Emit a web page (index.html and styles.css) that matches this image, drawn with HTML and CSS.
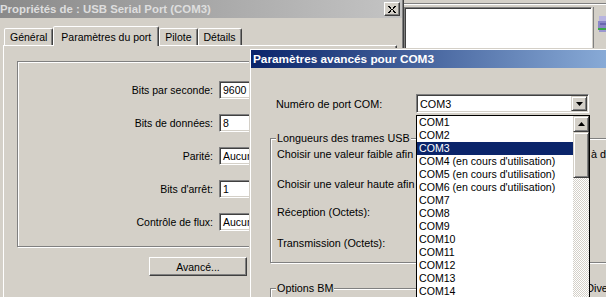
FILE: index.html
```html
<!DOCTYPE html>
<html lang="fr">
<head>
  <meta charset="UTF-8">
  <meta name="viewport" content="width=device-width, initial-scale=1.0">
  <title>Paramètres avancés pour COM3</title>
  <link rel="stylesheet" href="styles.css">
</head>
<body>

  <!-- background window: port properties -->
  <div class="win props">
    <div class="caption inactive">
      <span class="caption-text">Propriétés de : USB Serial Port (COM3)</span>
      <span class="cap-btn">
        <svg width="8" height="7" viewBox="0 0 8 7" shape-rendering="crispEdges">
          <path d="M0 0h2v1h-2zM1 1h2v1h-2zM2 2h1v1h-1zM3 3h2v1h-2zM2 4h1v1h-1zM1 5h2v1h-2zM0 6h2v1h-2zM6 0h2v1h-2zM5 1h2v1h-2zM5 2h1v1h-1zM5 4h1v1h-1zM5 5h2v1h-2zM6 6h2v1h-2z" fill="#000"/>
        </svg>
      </span>
    </div>

    <div class="tabs">
      <div class="tab">Général</div>
      <div class="tab active">Paramètres du port</div>
      <div class="tab">Pilote</div>
      <div class="tab">Détails</div>
    </div>

    <div class="tab-panel">
      <div class="frame">
        <div class="field"><label>Bits par seconde:</label><div class="combo">9600</div></div>
        <div class="field"><label>Bits de données:</label><div class="combo">8</div></div>
        <div class="field"><label>Parité:</label><div class="combo">Aucune</div></div>
        <div class="field"><label>Bits d'arrêt:</label><div class="combo">1</div></div>
        <div class="field"><label>Contrôle de flux:</label><div class="combo">Aucun</div></div>
      </div>
      <div class="btn-row">
        <button class="btn">Avancé...</button>
        <button class="btn wide">Paramètres par défaut</button>
      </div>
    </div>
  </div>

  <!-- window behind, top right -->
  <div class="win explorer">
    <div class="ex-bar"></div>
    <div class="ex-main">
      <div class="ex-list"></div>
      <div class="ex-side">
        <svg width="10" height="18" viewBox="0 0 10 18">
          <rect x="1" y="1" width="9" height="6" fill="#b8b4e0"/>
          <rect x="0" y="6" width="10" height="7" fill="#8a86c8"/>
          <rect x="2" y="8" width="8" height="2" fill="#6a66b0"/>
          <rect x="0" y="13" width="10" height="2" fill="#3aa64a"/>
          <rect x="1" y="15" width="9" height="2" fill="#9a96d0"/>
        </svg>
      </div>
    </div>
  </div>

  <!-- front window: advanced settings -->
  <div class="win adv">
    <div class="caption active">Paramètres avancés pour COM3</div>
    <div class="adv-body">
      <div class="port-row">
        <label>Numéro de port COM:</label>
        <div class="dropdown">
          <div class="combo port">COM3<span class="drop-btn"><svg width="7" height="4" viewBox="0 0 7 4"><polygon points="0,0 7,0 3.5,4" fill="#000"/></svg></span></div>
          <div class="listbox">
            <ul class="items">
              <li>COM1</li>
              <li>COM2</li>
              <li class="sel">COM3</li>
              <li>COM4 (en cours d'utilisation)</li>
              <li>COM5 (en cours d'utilisation)</li>
              <li>COM6 (en cours d'utilisation)</li>
              <li>COM7</li>
              <li>COM8</li>
              <li>COM9</li>
              <li>COM10</li>
              <li>COM11</li>
              <li>COM12</li>
              <li>COM13</li>
              <li>COM14</li>
              <li>COM15</li>
            </ul>
            <div class="vscroll">
              <div class="sb-btn"><svg width="7" height="4" viewBox="0 0 7 4"><polygon points="3.5,0 7,4 0,4" fill="#000"/></svg></div>
              <div class="sb-thumb"></div>
              <div class="sb-track"></div>
            </div>
          </div>
        </div>
      </div>

      <fieldset class="group usb">
        <legend>Longueurs des trames USB</legend>
        <p>Choisir une valeur faible afin de réduire les problèmes de latence à débit faible.</p>
        <p class="second">Choisir une valeur haute afin d'améliorer les performances.</p>
        <div class="size-row"><span>Réception (Octets):</span><div class="combo small"></div></div>
        <div class="size-row"><span>Transmission (Octets):</span><div class="combo small"></div></div>
      </fieldset>

      <div class="group-row">
        <fieldset class="group bm"><legend>Options BM</legend></fieldset>
        <fieldset class="group misc"><legend>Divers</legend></fieldset>
      </div>
    </div>
  </div>

</body>
</html>
```

FILE: styles.css
```css
* {
  box-sizing: border-box;
}
body {
  margin: 0;
  width: 606px;
  height: 297px;
  overflow: hidden;
  position: relative;
  background: #d4d0c8;
  font-family: "Liberation Sans", Arial, sans-serif;
  font-size: 10.5px;
  color: #000;
}
.win {
  position: absolute;
  background: #d4d0c8;
}

/* shared widgets */
.caption {
  height: 18px;
  display: flex;
  align-items: center;
  justify-content: space-between;
  font-weight: bold;
  white-space: nowrap;
}
.caption.inactive {
  background: linear-gradient(to right, #8a8a8a, #c4c4c4);
  color: #dedede;
  font-size: 11.4px;
  margin-right: 1px;
  padding-right: 2px;
}
.caption.active {
  width: 440px;
  background: linear-gradient(to right, #0a246a, #a6caf0);
  color: #fff;
  font-size: 11.8px;
  padding-left: 2px;
}
.cap-btn {
  width: 16px;
  height: 14px;
  display: flex;
  align-items: center;
  justify-content: center;
  background: #d4d0c8;
  border: 1px solid;
  border-color: #fff #404040 #404040 #fff;
  box-shadow: inset -1px -1px #808080;
}
.combo {
  position: relative;
  height: 18px;
  width: 150px;
  background: #fff;
  border: 1px solid;
  border-color: #808080 #fff #fff #808080;
  box-shadow: inset 1px 1px #404040, inset -1px -1px #d4d0c8;
  padding-left: 3px;
  display: flex;
  align-items: center;
}
.btn {
  height: 19px;
  width: 98px;
  font: inherit;
  background: #d4d0c8;
  border: 1px solid;
  border-color: #fff #404040 #404040 #fff;
  box-shadow: inset -1px -1px #808080;
  padding: 0;
}
.btn.wide {
  width: 128px;
}
.group {
  margin: 0;
  border: 1px solid #808080;
  box-shadow: inset 1px 1px #fff, 1px 1px #fff;
  padding: 0 6px;
}
.group legend {
  background: #d4d0c8;
  padding: 0 1px;
  margin-left: -1px;
  line-height: 13px;
}

/* properties window */
.props {
  left: 0;
  top: 0;
  width: 404px;
  height: 310px;
  border-right: 1px solid #404040;
  box-shadow: inset -1px 0 #808080;
}
.caption-text {
  padding-left: 0;
}
.tabs {
  display: flex;
  align-items: flex-end;
  height: 19px;
  margin: 8px 0 0 4px;
  position: relative;
  z-index: 1;
}
.tab {
  height: 17px;
  padding: 0 5px;
  display: flex;
  align-items: center;
  background: #d4d0c8;
  border: 1px solid;
  border-bottom: none;
  border-color: #fff #404040 transparent #fff;
  border-radius: 2px 2px 0 0;
  box-shadow: inset -1px 0 #808080;
}
.tab.active {
  height: 20px;
  margin-bottom: -1px;
  padding: 0 7px;
}
.tab-panel {
  height: 270px;
  margin: 0 6px 0 3px;
  border: 1px solid;
  border-color: #fff #404040 #404040 #fff;
  box-shadow: inset -1px -1px #808080;
  padding: 15px 13px 0 13px;
}
.frame {
  display: flex;
  flex-direction: column;
  gap: 15px;
  border: 1px solid #808080;
  box-shadow: inset 1px 1px #fff, 1px 1px #fff;
  padding: 19px 0 15px 0;
}
.field {
  display: flex;
  align-items: center;
  height: 18px;
}
.field label {
  width: 195px;
  text-align: right;
  margin-right: 6px;
}
.btn-row {
  display: flex;
  justify-content: flex-end;
  gap: 8px;
  margin-top: 10px;
}

/* window at the top right */
.explorer {
  left: 404px;
  top: 0;
  width: 210px;
  height: 60px;
}
.ex-bar {
  height: 7px;
  border-top: 3px solid #d4d0c8;
  box-shadow: inset 0 1px #808080;
}
.ex-bar::after {
  content: "";
  display: block;
  height: 1px;
  margin-top: 1px;
  background: #fff;
}
.ex-main {
  display: flex;
  height: 53px;
}
.ex-list {
  width: 188px;
  background: #fff;
  border: 1px solid;
  border-color: #808080 #fff #fff #808080;
  box-shadow: inset 1px 1px #404040;
}
.ex-side {
  flex: 1;
  border-left: 1px solid #808080;
  margin-left: 1px;
  padding: 8px 0 0 4px;
}

/* advanced window */
.adv {
  left: 249px;
  top: 48px;
  width: 450px;
  height: 260px;
  border-left: 1px solid #d4d0c8;
  border-top: 1px solid #d4d0c8;
  box-shadow: inset 1px 1px #fff;
  padding: 1px 0 0 1px;
  font-size: 10.8px;
}
.adv-body {
  padding: 26px 0 0 19px;
}
.port-row {
  display: flex;
  align-items: center;
  height: 19px;
  padding-left: 6px;
}
.port-row label {
  width: 140px;
}
.dropdown {
  position: relative;
}
.combo.port {
  width: 173px;
  height: 19px;
}
.drop-btn {
  position: absolute;
  right: 1px;
  top: 1px;
  width: 16px;
  height: 15px;
  display: flex;
  align-items: center;
  justify-content: center;
  background: #d4d0c8;
  border: 1px solid;
  border-color: #d4d0c8 #404040 #404040 #d4d0c8;
  box-shadow: inset 1px 1px #fff, inset -1px -1px #808080;
}
.listbox {
  position: absolute;
  left: 0;
  top: 21px;
  width: 174px;
  height: 200px;
  display: flex;
  background: #fff;
  border: 1px solid #000;
  z-index: 2;
  font-size: 10.6px;
}
.items {
  list-style: none;
  margin: 0;
  padding: 0;
  flex: 1;
}
.items li {
  height: 13px;
  line-height: 13px;
  padding-left: 2px;
  white-space: nowrap;
}
.items li.sel {
  background: #0a246a;
  color: #fff;
}
.vscroll {
  width: 16px;
  display: flex;
  flex-direction: column;
}
.sb-btn,
.sb-thumb {
  background: #d4d0c8;
  border: 1px solid;
  border-color: #d4d0c8 #404040 #404040 #d4d0c8;
  box-shadow: inset 1px 1px #fff, inset -1px -1px #808080;
}
.sb-btn {
  height: 16px;
  display: flex;
  align-items: center;
  justify-content: center;
}
.sb-thumb {
  height: 46px;
}
.sb-track {
  flex: 1;
  background: repeating-conic-gradient(#d4d0c8 0 25%, #fff 0 50%) 0 0 / 2px 2px;
}
.usb {
  width: 430px;
  margin-top: 19px;
  padding-top: 3px;
  padding-bottom: 9px;
}
.usb p {
  margin: 0;
  line-height: 13px;
  white-space: nowrap;
}
.usb p.second {
  margin-top: 17px;
}
.size-row {
  display: flex;
  align-items: center;
  height: 21px;
  margin-top: 10px;
}
.size-row span {
  width: 150px;
}
.combo.small {
  width: 70px;
  height: 21px;
}
.group-row {
  display: flex;
  gap: 5px;
  margin-top: 19px;
}
.group.bm {
  width: 316px;
  height: 60px;
}
.group.misc {
  width: 120px;
  height: 60px;
  padding-left: 3px;
}
```
